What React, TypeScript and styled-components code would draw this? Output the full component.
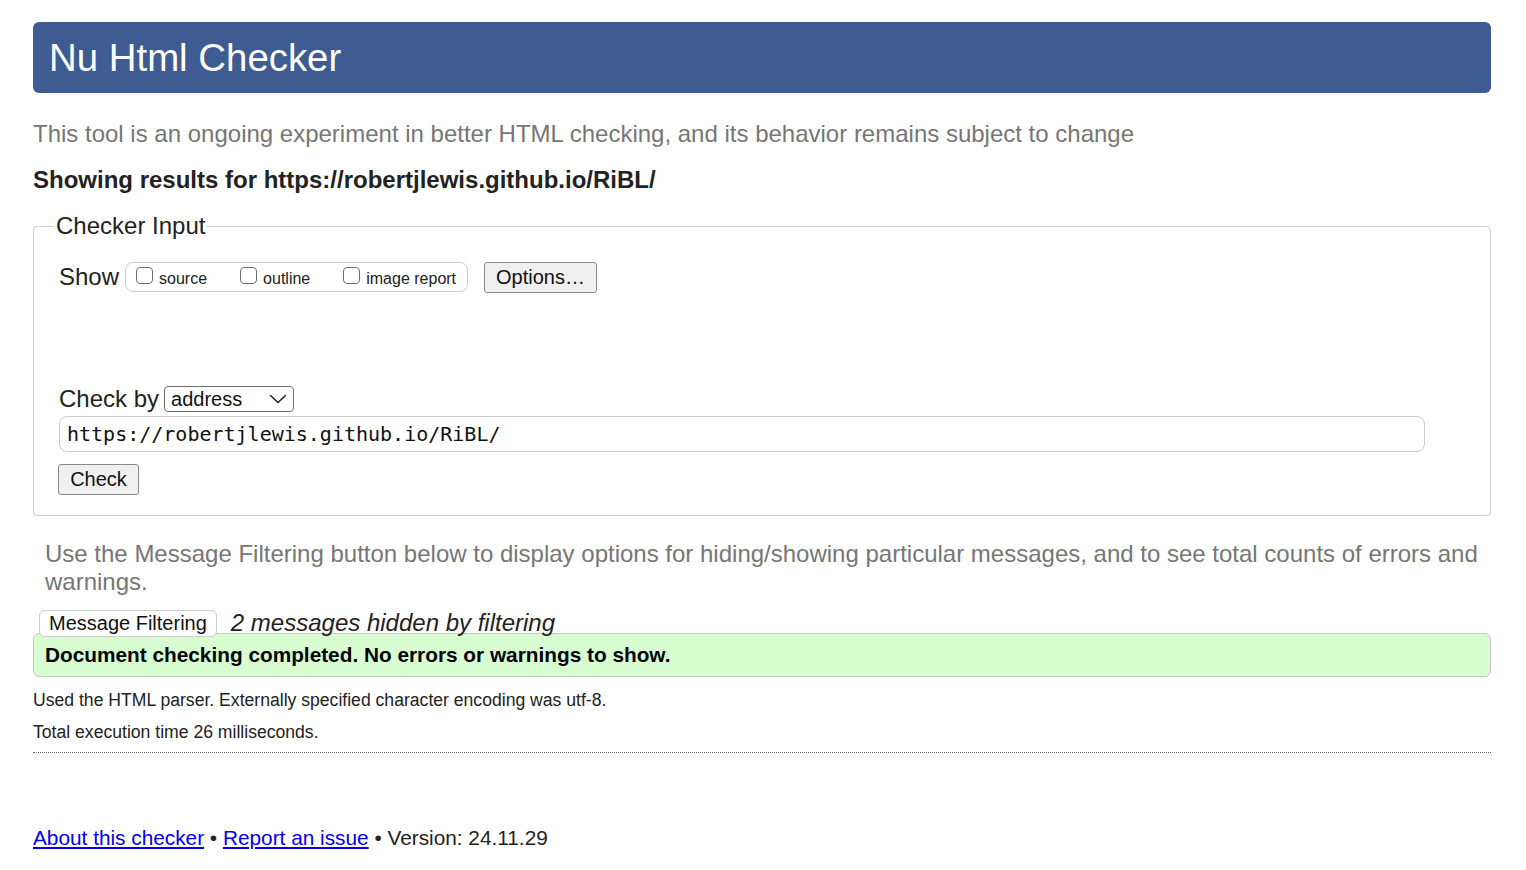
import styled, { createGlobalStyle } from "styled-components";

const GlobalStyle = createGlobalStyle`
  html, body {
    margin: 0;
    padding: 0;
    background: #fff;
  }
  body {
    font-family: "Liberation Sans", Arial, Helvetica, sans-serif;
    color: #222;
  }
`;

const Page = styled.div`
  padding: 22px 35px 40px 33px;
`;

const Header = styled.h1`
  margin: 0;
  height: 71px;
  padding: 0 16px;
  background: #3e5c91;
  border-radius: 6px;
  color: #fff;
  font-size: 38.4px;
  font-weight: normal;
  line-height: 71px;
`;

const Intro = styled.p`
  margin: 27px 0 0;
  color: #767676;
  font-size: 24px;
  line-height: 28px;
`;

const Results = styled.p`
  margin: 18px 0 0;
  font-size: 24px;
  font-weight: bold;
  line-height: 28px;
`;

const Fieldset = styled.fieldset`
  margin: 18px 0 0;
  padding: 0 24px 20px 25px;
  border: 1px solid #cdcdcd;
  border-radius: 4px;
`;

const Legend = styled.legend`
  margin-left: -5px;
  padding: 0 2px;
  font-size: 24px;
  line-height: 28px;
`;

const ShowRow = styled.div`
  display: flex;
  align-items: center;
  height: 30px;
  margin-top: 22px;
`;

const FieldLabel = styled.span`
  font-size: 24px;
  line-height: 28px;
`;

const CheckGroup = styled.div`
  display: flex;
  align-items: center;
  gap: 33px;
  height: 28px;
  margin-left: 6px;
  padding: 0 11px 0 10px;
  border: 1px solid #cdcdcd;
  border-radius: 8px;
`;

const CheckLabel = styled.label`
  display: flex;
  align-items: flex-start;
  font-size: 16px;
  line-height: 18px;
  padding-top: 4px;
`;

const Box = styled.input`
  appearance: none;
  width: 17px;
  height: 17px;
  margin: -3px 6px 0 0;
  border: 1px solid #6f6f6f;
  border-radius: 4px;
  background: #fff;
`;

const PlainButton = styled.button`
  font-family: "Liberation Sans", Arial, Helvetica, sans-serif;
  font-size: 20px;
  color: #111;
  background: #efefef;
  border: 1px solid #8a8a8a;
  border-radius: 3px;
  padding: 0 11px;
  height: 31px;
  line-height: 29px;
`;

const OptionsButton = styled(PlainButton)`
  margin-left: 16px;
  height: 31px;
`;

const CheckByRow = styled.div`
  display: flex;
  align-items: center;
  margin-top: 93px;
`;

const SelectWrap = styled.div`
  position: relative;
  margin-left: 5px;
`;

const Select = styled.select`
  appearance: none;
  width: 130px;
  height: 26px;
  padding: 0 0 0 6px;
  font-family: "Liberation Sans", Arial, Helvetica, sans-serif;
  font-size: 20px;
  color: #111;
  background: #fff;
  border: 1px solid #6f6f6f;
  border-radius: 4px;
`;

const Chevron = styled.svg`
  position: absolute;
  right: 7px;
  top: 8px;
  pointer-events: none;
`;

const UrlInput = styled.input`
  display: block;
  box-sizing: border-box;
  width: 1366px;
  height: 36px;
  margin: 3px 0 0;
  padding: 0 7px;
  font-family: "DejaVu Sans Mono", "Liberation Mono", monospace;
  font-size: 20px;
  color: #111;
  border: 1px solid #cdcdcd;
  border-radius: 8px;
  outline: none;
`;

const CheckButton = styled(PlainButton)`
  display: block;
  margin: 12px 0 0 -1px;
  width: 81px;
  padding: 0;
`;

const Hint = styled.p`
  margin: 24px 0 0;
  padding: 0 12px;
  color: #767676;
  font-size: 24px;
  line-height: 28px;
`;

const FilterRow = styled.div`
  display: flex;
  align-items: center;
  margin-top: 13px;
  padding-left: 6px;
`;

const FilterButton = styled.button`
  position: relative;
  z-index: 1;
  height: 27px;
  padding: 0 9px;
  font-family: "Liberation Sans", Arial, Helvetica, sans-serif;
  font-size: 20px;
  line-height: 25px;
  color: #111;
  background: #fff;
  border: 1px solid #cdcdcd;
  border-radius: 6px;
`;

const Hidden = styled.em`
  margin-left: 14px;
  font-size: 24px;
  line-height: 28px;
`;

const Success = styled.div`
  margin: -4px 0 12px;
  height: 42px;
  padding: 0 11px;
  background: #d7fdd1;
  border: 1px solid #c9c9c9;
  border-radius: 6px;
  font-size: 20.8px;
  font-weight: bold;
  line-height: 42px;
  color: #000;
`;

const Detail = styled.p`
  margin: 10px 0 0;
  font-size: 17.6px;
  line-height: 22px;
`;

const Rule = styled.hr`
  margin: 9px 0 0;
  border: 0;
  border-top: 1px dotted #666;
`;

const Footer = styled.p`
  margin: 71px 0 0;
  font-size: 20.8px;
  line-height: 28px;
`;

const Link = styled.a`
  color: #0000ee;
  text-decoration: underline;
`;

export default function App() {
  const url = "https://robertjlewis.github.io/RiBL/";
  return (
    <Page>
      <GlobalStyle />
      <Header>Nu Html Checker</Header>
      <Intro>
        This tool is an ongoing experiment in better HTML checking, and its
        behavior remains subject to change
      </Intro>
      <Results>Showing results for {url}</Results>
      <Fieldset>
        <Legend>Checker Input</Legend>
        <ShowRow>
          <FieldLabel>Show</FieldLabel>
          <CheckGroup>
            <CheckLabel>
              <Box type="checkbox" />
              source
            </CheckLabel>
            <CheckLabel>
              <Box type="checkbox" />
              outline
            </CheckLabel>
            <CheckLabel>
              <Box type="checkbox" />
              image report
            </CheckLabel>
          </CheckGroup>
          <OptionsButton>Options…</OptionsButton>
        </ShowRow>
        <CheckByRow>
          <FieldLabel>Check by</FieldLabel>
          <SelectWrap>
            <Select defaultValue="address">
              <option value="address">address</option>
              <option value="file">file upload</option>
              <option value="text">text input</option>
            </Select>
            <Chevron width="18" height="10" viewBox="0 0 18 10">
              <path
                d="M1.5 1.5 L9 8.5 L16.5 1.5"
                fill="none"
                stroke="#222"
                strokeWidth="1.6"
                strokeLinecap="round"
                strokeLinejoin="round"
              />
            </Chevron>
          </SelectWrap>
        </CheckByRow>
        <UrlInput type="text" defaultValue={url} />
        <CheckButton>Check</CheckButton>
      </Fieldset>
      <Hint>
        Use the Message Filtering button below to display options for
        hiding/showing particular messages, and to see total counts of errors
        and warnings.
      </Hint>
      <FilterRow>
        <FilterButton>Message Filtering</FilterButton>
        <Hidden>2 messages hidden by filtering</Hidden>
      </FilterRow>
      <Success>Document checking completed. No errors or warnings to show.</Success>
      <Detail>
        Used the HTML parser. Externally specified character encoding was
        utf-8.
      </Detail>
      <Detail>Total execution time 26 milliseconds.</Detail>
      <Rule />
      <Footer>
        <Link href="#about">About this checker</Link> •{" "}
        <Link href="#issue">Report an issue</Link> • Version: 24.11.29
      </Footer>
    </Page>
  );
}
